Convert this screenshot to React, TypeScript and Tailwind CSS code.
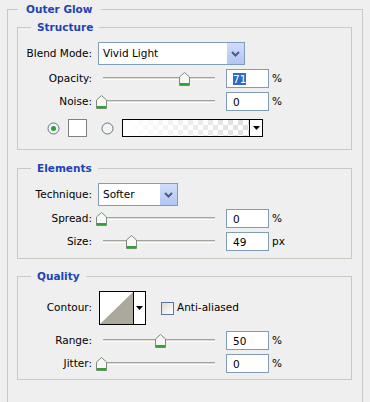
import React from "react";

const Thumb = () => (
  <svg width="11" height="14" viewBox="0 0 11 14">
    <path d="M5.5 0.5 L10.5 5 V13.5 H0.5 V5 Z" fill="#f6f7f6" stroke="#7d8a7d" />
    <rect x="1" y="11" width="9" height="2.2" fill="#2ea52e" />
  </svg>
);

const Slider = ({ pos }: { pos: number }) => (
  <div className="relative w-[126px] h-[19px]">
    <div className="absolute left-[7px] w-[112px] top-[8px] h-[3px] border-t border-t-[#a4a49c] border-b border-b-white bg-[#dcdcd4]" />
    <div className="absolute top-[3px] leading-none" style={{ left: pos }}>
      <Thumb />
    </div>
  </div>
);

const NumInput = ({ value, selected }: { value: string; selected?: boolean }) => (
  <div className="w-[43px] h-[19px] border border-[#7f9db9] bg-white flex items-center pl-[6px]">
    {selected ? (
      <span className="bg-[#316ac5] text-white leading-[12px]">{value}</span>
    ) : (
      <span className="leading-[12px]">{value}</span>
    )}
  </div>
);

const SliderRow = ({
  label,
  pos,
  value,
  unit,
  selected,
  mt,
}: {
  label: string;
  pos: number;
  value: string;
  unit: string;
  selected?: boolean;
  mt: string;
}) => (
  <div className={`flex items-center h-[19px] ${mt}`}>
    <span className="w-[74px] text-right">{label}</span>
    <div className="ml-[4px]">
      <Slider pos={pos} />
    </div>
    <div className="ml-[4px]">
      <NumInput value={value} selected={selected} />
    </div>
    <span className="ml-[3px]">{unit}</span>
  </div>
);

const Chevron = () => (
  <svg width="9" height="6" viewBox="0 0 9 6">
    <path d="M1 1 L4.5 4.5 L8 1" fill="none" stroke="#4a5d85" strokeWidth="2" />
  </svg>
);

const Select = ({ value, w }: { value: string; w: string }) => (
  <div className={`${w} h-[23px] border border-[#7f9db9] bg-white flex items-center`}>
    <span className="pl-[4px] flex-1">{value}</span>
    <div className="w-[17px] h-[21px] bg-linear-to-b from-[#d0dcfb] to-[#b2c6f3] flex items-center justify-center">
      <Chevron />
    </div>
  </div>
);

const Radio = ({ checked }: { checked?: boolean }) => (
  <svg width="13" height="13" viewBox="0 0 13 13">
    <circle cx="6.5" cy="6.5" r="5.5" fill="#f4f4f0" stroke="#5d7596" />
    {checked && <circle cx="6.5" cy="6.5" r="2.5" fill="#2fa032" />}
  </svg>
);

const DownTri = () => (
  <svg width="7" height="4" viewBox="0 0 7 4">
    <path d="M0 0 H7 L3.5 4 Z" fill="#000" />
  </svg>
);

const Legend = ({ children, ml }: { children: React.ReactNode; ml: string }) => (
  <legend className={`${ml} px-[6px] font-bold text-[#1d44b5] leading-[13px]`}>{children}</legend>
);

export default function App() {
  return (
    <div className="w-[370px] h-[402px] overflow-hidden bg-[#efefef] pl-[7px] pr-[7px] pt-[3px] font-['DejaVu_Sans',sans-serif] text-[10.5px] text-black">
      <fieldset className="border border-[#c9c9c1] h-[430px] pl-[9px] pr-[10px]">
        <legend className="ml-[1px] px-[8px] font-bold text-[#1d44b5] leading-[13px]">Outer Glow</legend>

        {/* Structure */}
        <fieldset className="mt-[5px] border border-[#c9c9c1] pb-[12px]">
          <Legend ml="ml-[13px]">Structure</Legend>
          <div className="flex items-center h-[23px] mt-[8px]">
            <span className="w-[74px] text-right">Blend Mode:</span>
            <div className="ml-[6px]">
              <Select value="Vivid Light" w="w-[147px]" />
            </div>
          </div>
          <SliderRow label="Opacity:" pos={83} value="71" unit="%" selected mt="mt-[4px]" />
          <SliderRow label="Noise:" pos={0} value="0" unit="%" mt="mt-[4px]" />
          <div className="flex items-center h-[18px] mt-[8px]">
            <div className="ml-[29px] leading-none">
              <Radio checked />
            </div>
            <div className="ml-[8px] w-[19px] h-[18px] border border-[#808080] bg-white" />
            <div className="ml-[14px] leading-none">
              <Radio />
            </div>
            <div className="ml-[8px] w-[141px] h-[18px] border border-black flex bg-[repeating-conic-gradient(#dedede_0%_25%,#ffffff_0%_50%)] bg-[length:10px_10px]">
              <div className="flex-1 bg-linear-to-r from-white to-white/0" />
              <div className="w-[13px] border-l border-black bg-white flex items-center justify-center">
                <DownTri />
              </div>
            </div>
          </div>
        </fieldset>

        {/* Elements */}
        <fieldset className="mt-[12px] border border-[#c9c9c1] pb-[7px]">
          <Legend ml="ml-[13px]">Elements</Legend>
          <div className="flex items-center h-[23px] mt-[8px]">
            <span className="w-[74px] text-right">Technique:</span>
            <div className="ml-[6px]">
              <Select value="Softer" w="w-[80px]" />
            </div>
          </div>
          <SliderRow label="Spread:" pos={0} value="0" unit="%" mt="mt-[3px]" />
          <SliderRow label="Size:" pos={30} value="49" unit="px" mt="mt-[4px]" />
        </fieldset>

        {/* Quality */}
        <fieldset className="mt-[11px] border border-[#c9c9c1] pb-[6px]">
          <Legend ml="ml-[13px]">Quality</Legend>
          <div className="flex items-center h-[34px] mt-[8px]">
            <span className="w-[74px] text-right">Contour:</span>
            <div className="ml-[7px] w-[47px] h-[34px] border border-black flex bg-white">
              <div className="w-[33px] h-full leading-none">
                <svg width="33" height="32" viewBox="0 0 33 32" className="block">
                  <path d="M0 32 L33 0 V32 Z" fill="#aca89b" />
                </svg>
              </div>
              <div className="flex-1 border-l border-black flex items-center justify-center">
                <DownTri />
              </div>
            </div>
            <div className="ml-[15px] w-[13px] h-[13px] border border-[#5d7596] bg-linear-to-br from-[#dcdcd6] to-white" />
            <span className="ml-[3px]">Anti-aliased</span>
          </div>
          <SliderRow label="Range:" pos={59} value="50" unit="%" mt="mt-[6px]" />
          <SliderRow label="Jitter:" pos={0} value="0" unit="%" mt="mt-[4px]" />
        </fieldset>
      </fieldset>
    </div>
  );
}
